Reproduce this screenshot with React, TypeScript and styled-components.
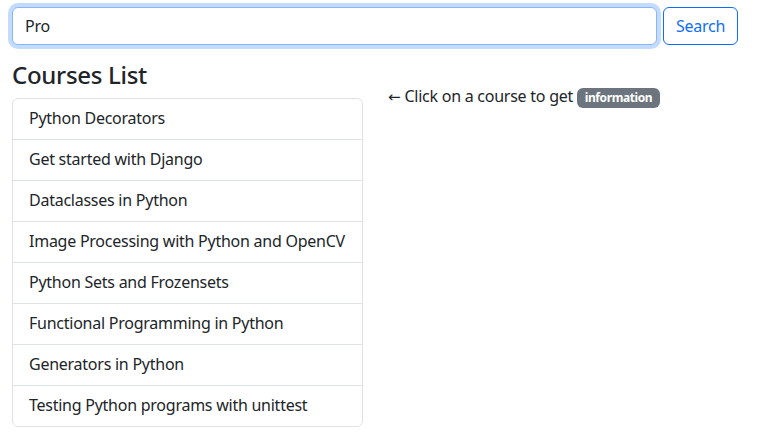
import React, { useState } from "react";
import styled, { createGlobalStyle } from "styled-components";

const Global = createGlobalStyle`
  html, body { margin: 0; padding: 0; background: #fff; }
  body {
    font-family: "Noto Sans", "Open Sans", sans-serif;
    font-size: 16px;
    line-height: 1.5;
    letter-spacing: -0.25px;
    color: #212529;
  }
  * { box-sizing: border-box; }
`;

const Page = styled.div`
  padding: 7px 19px 0 12px;
`;

const SearchForm = styled.form`
  display: flex;
  gap: 6px;
  margin: 0 0 15px;
`;

const SearchInput = styled.input`
  flex: 1;
  height: 38px;
  padding: 6px 12px;
  font: inherit;
  letter-spacing: inherit;
  color: #212529;
  border: 1px solid #86b7fe;
  border-radius: 6px;
  outline: none;
  box-shadow: 0 0 0 4px rgba(13, 110, 253, 0.25);
`;

const SearchButton = styled.button`
  width: 75px;
  height: 38px;
  font: inherit;
  letter-spacing: inherit;
  color: #0d6efd;
  background: #fff;
  border: 1px solid #0d6efd;
  border-radius: 6px;
  padding: 6px 0;
  cursor: pointer;
`;

const Columns = styled.div`
  display: grid;
  grid-template-columns: 351px 1fr;
  column-gap: 25px;
`;

const Heading = styled.h3`
  margin: 0 0 8px;
  font-size: 24px;
  font-weight: 500;
  line-height: 30px;
  letter-spacing: -0.3px;
`;

const ListGroup = styled.ul`
  list-style: none;
  margin: 0;
  padding: 0;
  border: 1px solid #dee2e6;
  border-radius: 6px;
`;

const ListItem = styled.li`
  padding: 7px 16px 9px;
  height: 41px;
  white-space: nowrap;
  border-top: 1px solid #dee2e6;
  &:first-child { border-top: none; height: 40px; }
  cursor: pointer;
`;

const Info = styled.p`
  margin: 24px 0 0;
  white-space: nowrap;
`;

const Arrow = styled.span`
  font-family: "DejaVu Sans", sans-serif;
  font-size: 15px;
  letter-spacing: 0;
`;

const Badge = styled.span`
  display: inline-block;
  padding: 4px 7.8px;
  font-size: 12px;
  font-weight: 700;
  line-height: 1;
  letter-spacing: -0.4px;
  color: #fff;
  background: #6c757d;
  border-radius: 6px;
`;

const courses = [
  "Python Decorators",
  "Get started with Django",
  "Dataclasses in Python",
  "Image Processing with Python and OpenCV",
  "Python Sets and Frozensets",
  "Functional Programming in Python",
  "Generators in Python",
  "Testing Python programs with unittest",
];

export default function App() {
  const [q, setQ] = useState("Pro");
  return (
    <Page>
      <Global />
      <SearchForm onSubmit={(e) => e.preventDefault()}>
        <SearchInput value={q} onChange={(e) => setQ(e.target.value)} />
        <SearchButton type="submit">Search</SearchButton>
      </SearchForm>
      <Columns>
        <div>
          <Heading>Courses List</Heading>
          <ListGroup>
            {courses.map((c) => (
              <ListItem key={c}>{c}</ListItem>
            ))}
          </ListGroup>
        </div>
        <div>
          <Info>
            <Arrow>←</Arrow> Click on a course to get <Badge>information</Badge>
          </Info>
        </div>
      </Columns>
    </Page>
  );
}
